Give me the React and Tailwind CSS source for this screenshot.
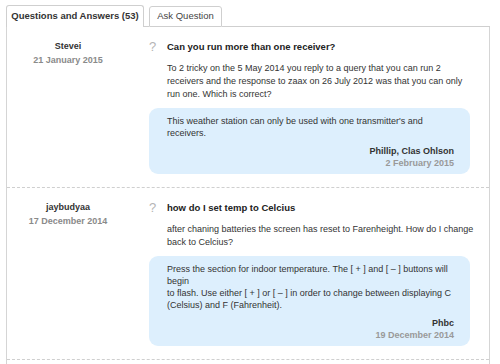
const items = [
  {
    user: "Stevei",
    date: "21 January 2015",
    title: "Can you run more than one receiver?",
    body: ["To 2 tricky on the 5 May 2014 you reply to a query that you can run 2 receivers and the response to zaax on 26 July 2012 was that you can only run one. Which is correct?"],
    answer: ["This weather station can only be used with one transmitter's and receivers."],
    answerBy: "Phillip, Clas Ohlson",
    answerDate: "2 February 2015",
  },
  {
    user: "jaybudyaa",
    date: "17 December 2014",
    title: "how do I set temp to Celcius",
    body: ["after chaning batteries the screen has reset to Farenheight. How do I change back to Celcius?"],
    answer: [
      "Press the section for indoor temperature. The [ + ] and [ \u2013 ] buttons will begin",
      "to flash. Use either [ + ] or [ \u2013 ] in order to change between displaying C (Celsius) and F (Fahrenheit).",
    ],
    answerBy: "Phbc",
    answerDate: "19 December 2014",
  },
];

function QuestionRow({ q }) {
  return (
    <div className="flex border-b border-dashed border-[#cfcfcf] pt-[13px] pb-[13px]">
      {/* autor */}
      <div className="w-[122px] shrink-0 text-center">
        <p className="text-[9px] font-bold text-[#333] leading-[13px]">{q.user}</p>
        <p className="text-[9px] font-bold text-[#8a8a8a] leading-[13px] mt-[1px]">{q.date}</p>
      </div>

      {/* pregunta */}
      <div className="ml-[20px] w-[321px]">
        <div className="flex items-start">
          <span className="w-[18px] text-[13px] leading-[13px] text-[#b5b5b5]">?</span>
          <p className="text-[9.5px] font-bold text-[#222] leading-[13px]">{q.title}</p>
        </div>
        <div className="pl-[18px] -mr-[6px] mt-[9px] text-[9px] text-[#333] leading-[13px]">
          {q.body.map((t, i) => (
            <p key={i}>{t}</p>
          ))}
        </div>

        {/* respuesta */}
        <div className="mt-[7px] rounded-[9px] bg-[#ddeffd] pl-[18px] pr-[16px] pt-[7px] pb-[5px]">
          <div className="text-[9px] text-[#333] leading-[12px]">
            {q.answer.map((t, i) => (
              <p key={i}>{t}</p>
            ))}
          </div>
          <div className="mt-[6px] text-right text-[9px] font-bold leading-[12px]">
            <p className="text-[#333]">{q.answerBy}</p>
            <p className="text-[#999]">{q.answerDate}</p>
          </div>
        </div>
      </div>
    </div>
  );
}

export default function App() {
  return (
    <div className="w-[500px] h-[364px] bg-white overflow-hidden pt-[5px] pl-[6px] pr-[10px]" style={{ fontFamily: '"Liberation Sans", Arial, sans-serif' }}>
      {/* pestañas */}
      <div className="flex items-end h-[22px]">
        <div className="h-[22px] w-[138px] border border-b-0 border-[#cfcfcf] rounded-t-[3px] bg-white flex items-center justify-center text-[9.5px] font-bold text-[#333]">
          Questions and Answers (53)
        </div>
        <div className="w-[5px] h-full border-b border-[#cfcfcf]" />
        <div className="h-[21px] w-[73px] border border-[#cfcfcf] rounded-t-[3px] flex items-center justify-center text-[9.5px] text-[#444]">
          Ask Question
        </div>
        <div className="flex-1 h-full border-b border-[#cfcfcf]" />
      </div>

      {/* panel */}
      <div className="border-l border-r border-[#d5d5d5] h-[400px]">
        {items.map((q, i) => (
          <QuestionRow key={i} q={q} />
        ))}
      </div>
    </div>
  );
}
